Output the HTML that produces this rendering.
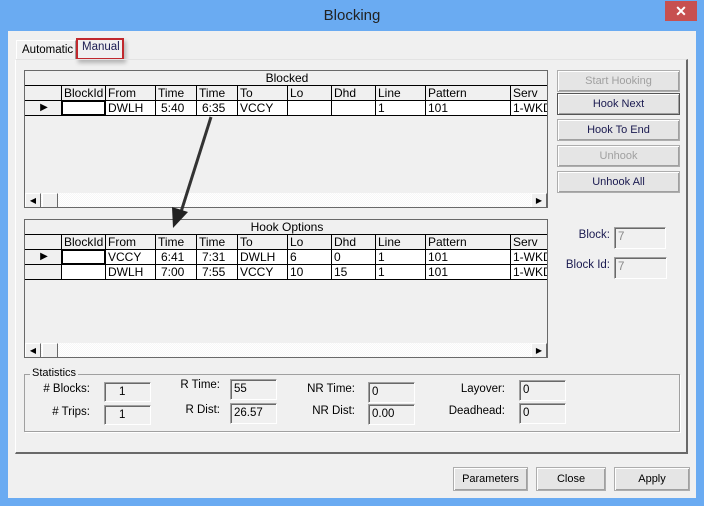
<!DOCTYPE html>
<html><head><style>
*{box-sizing:border-box;margin:0;padding:0}
body{width:704px;height:506px;background:#6aabf2;font-family:"Liberation Sans",sans-serif;font-size:12px;color:#000;position:relative;overflow:hidden}
.a{position:absolute}
.title{left:0;top:0;width:704px;height:31px;text-align:center;line-height:31px;font-size:15px;color:#222}
.close{left:665px;top:1px;width:32px;height:20px;background:#c75050;color:#fff;text-align:center;line-height:20px;font-size:14px;font-weight:bold}
.client{left:8px;top:31px;width:688px;height:467px;background:#f0f0f0}
.panel{left:15px;top:59px;width:673px;height:395px;border:1px solid #fff;border-right:2px solid #696969;border-bottom:2px solid #696969;border-top:1px solid #e3e3e3}
.grid{border:1px solid #696969;background:#f0f0f0;overflow:hidden}
.cell{position:absolute;border-right:1px solid #000;border-bottom:1px solid #000;height:15px;line-height:14px;padding-left:2px;white-space:nowrap;overflow:hidden}
.btn{position:absolute;border:1px solid #adadad;background:#e5e5e5;text-align:center;line-height:20px;box-shadow:inset 1px 1px #fff,inset -1px -1px #a0a0a0;font-size:11px}
.dis{color:#a0a0a0}
.inp{position:absolute;border:1px solid #a0a0a0;border-right-color:#fff;border-bottom-color:#fff;box-shadow:inset 1px 1px #696969;background:#f0f0f0;padding-left:3px;line-height:18px;font-size:11.5px}
.lbl{position:absolute;text-align:right;white-space:nowrap;font-size:11.5px}
.sb{position:absolute;height:15px;background:repeating-conic-gradient(#f7f7f7 0 25%,#fff 0 50%) 0 0/2px 2px}
.sbb{position:absolute;width:16px;height:15px;background:#f0f0f0;border:1px solid #fff;border-right-color:#696969;border-bottom-color:#696969;font-size:8px;text-align:center;line-height:13px}
</style></head><body>
<div class="a title">Blocking</div>
<div class="a close">✕</div>
<div class="a client"></div>
<!-- tabs -->
<div class="a" style="left:16px;top:40px;width:60px;height:20px;border:1px solid #fff;border-right:1px solid #a0a0a0;border-bottom:none;padding:3px 0 0 5px;font-size:11.5px">Automatic</div>
<div class="a" style="left:76px;top:38px;width:48px;height:22px;border:2px solid #c0282d;box-shadow:2px 3px 4px rgba(0,0,0,.25);padding:1px 0 0 4px;color:#1a1a50;font-size:11.5px;background:#f0f0f0">Manual</div>
<div class="a panel"></div>

<!-- grid 1 -->
<div class="a grid" style="left:24px;top:70px;width:524px;height:138px">
 <div class="cell" style="left:0;top:0;width:523px;text-align:center">Blocked</div>
 <div id="g1"></div>
 <div class="sb" style="left:1px;top:122px;width:520px"></div>
 <div class="sbb" style="left:0;top:122px">◀</div>
 <div class="sbb" style="left:17px;top:122px"></div>
 <div class="sbb" style="left:506px;top:122px">▶</div>
</div>
<!-- grid 2 -->
<div class="a grid" style="left:24px;top:219px;width:524px;height:139px">
 <div class="cell" style="left:0;top:0;width:523px;text-align:center">Hook Options</div>
 <div id="g2"></div>
 <div class="sb" style="left:1px;top:123px;width:520px"></div>
 <div class="sbb" style="left:0;top:123px">◀</div>
 <div class="sbb" style="left:17px;top:123px"></div>
 <div class="sbb" style="left:506px;top:123px">▶</div>
</div>

<!-- arrow -->
<svg class="a" style="left:0;top:0" width="704" height="506"><line x1="211" y1="117" x2="181" y2="212" stroke="#333" stroke-width="3"/><polygon points="173,228 172,207 188,212" fill="#222"/></svg>

<!-- right buttons -->
<div class="btn dis" style="left:557px;top:70px;width:123px;height:22px">Start Hooking</div>
<div class="btn" style="left:557px;top:93px;width:123px;height:22px;border:1px solid #555;color:#1a1a50">Hook Next</div>
<div class="btn" style="left:557px;top:119px;width:123px;height:22px;color:#1a1a50">Hook To End</div>
<div class="btn dis" style="left:557px;top:145px;width:123px;height:22px">Unhook</div>
<div class="btn" style="left:557px;top:171px;width:123px;height:22px;color:#1a1a50">Unhook All</div>
<div class="lbl" style="left:560px;top:229px;width:50px;color:#1a1a50">Block:</div>
<div class="inp dis" style="left:614px;top:227px;width:52px;height:22px;color:#888">7</div>
<div class="lbl" style="left:555px;top:259px;width:55px;color:#1a1a50">Block Id:</div>
<div class="inp dis" style="left:614px;top:257px;width:53px;height:22px;color:#888">7</div>

<!-- statistics -->
<div class="a" style="left:24px;top:374px;width:656px;height:58px;border:1px solid #a0a0a0;box-shadow:1px 1px #fff"></div>
<div class="a" style="left:30px;top:367px;background:#f0f0f0;padding:0 2px;font-size:11px">Statistics</div>
<div class="lbl" style="left:40px;top:383px;width:50px">#&nbsp;Blocks:</div>
<div class="inp" style="left:104px;top:382px;width:47px;height:20px;padding-left:14px">1</div>
<div class="lbl" style="left:40px;top:406px;width:50px"># Trips:</div>
<div class="inp" style="left:104px;top:405px;width:47px;height:20px;padding-left:14px">1</div>
<div class="lbl" style="left:170px;top:379px;width:50px">R Time:</div>
<div class="inp" style="left:230px;top:379px;width:47px;height:21px">55</div>
<div class="lbl" style="left:170px;top:404px;width:50px">R Dist:</div>
<div class="inp" style="left:230px;top:403px;width:47px;height:21px">26.57</div>
<div class="lbl" style="left:300px;top:383px;width:55px">NR Time:</div>
<div class="inp" style="left:368px;top:382px;width:47px;height:21px">0</div>
<div class="lbl" style="left:300px;top:405px;width:55px">NR Dist:</div>
<div class="inp" style="left:368px;top:404px;width:47px;height:21px">0.00</div>
<div class="lbl" style="left:440px;top:383px;width:65px">Layover:</div>
<div class="inp" style="left:519px;top:380px;width:47px;height:21px">0</div>
<div class="lbl" style="left:440px;top:405px;width:65px">Deadhead:</div>
<div class="inp" style="left:519px;top:403px;width:47px;height:21px">0</div>

<!-- bottom buttons -->
<div class="btn" style="left:453px;top:467px;width:75px;height:24px;line-height:22px">Parameters</div>
<div class="btn" style="left:536px;top:467px;width:70px;height:24px;line-height:22px">Close</div>
<div class="btn" style="left:614px;top:467px;width:76px;height:24px;line-height:22px">Apply</div>

<script>
var cols=[0,37,81,131,172,213,263,307,351,401,486,523];
var heads=["","BlockId","From","Time","Time","To","Lo","Dhd","Line","Pattern","Serv"];
function build(id,rows){
 var h="";
 for(var i=0;i<11;i++){h+='<div class="cell" style="left:'+cols[i]+'px;top:15px;width:'+(cols[i+1]-cols[i])+'px">'+heads[i]+'</div>';}
 rows.forEach(function(r,ri){
  var t=30+ri*15;
  for(var i=0;i<11;i++){
   var txt=r[i]||"";var bg=i==0?"#f0f0f0":"#fff";
   var extra=(i==0&&ri==0)?"text-align:center;font-size:10px;":"";
   if(i==1&&ri==0)extra+="box-shadow:inset 0 0 0 1px #000;";
   if(i==3||i==4)extra+="padding-left:5px;";
   h+='<div class="cell" style="left:'+cols[i]+'px;top:'+t+'px;width:'+(cols[i+1]-cols[i])+'px;background:'+bg+';'+extra+'">'+(i==0&&ri==0?"▶":txt)+'</div>';
  }
 });
 document.getElementById(id).innerHTML=h;
}
build("g1",[["","","DWLH","5:40","6:35","VCCY","","","1","101","1-WKD"]]);
build("g2",[["","","VCCY","6:41","7:31","DWLH","6","0","1","101","1-WKD"],["","","DWLH","7:00","7:55","VCCY","10","15","1","101","1-WKD"]]);
</script>
</body></html>
